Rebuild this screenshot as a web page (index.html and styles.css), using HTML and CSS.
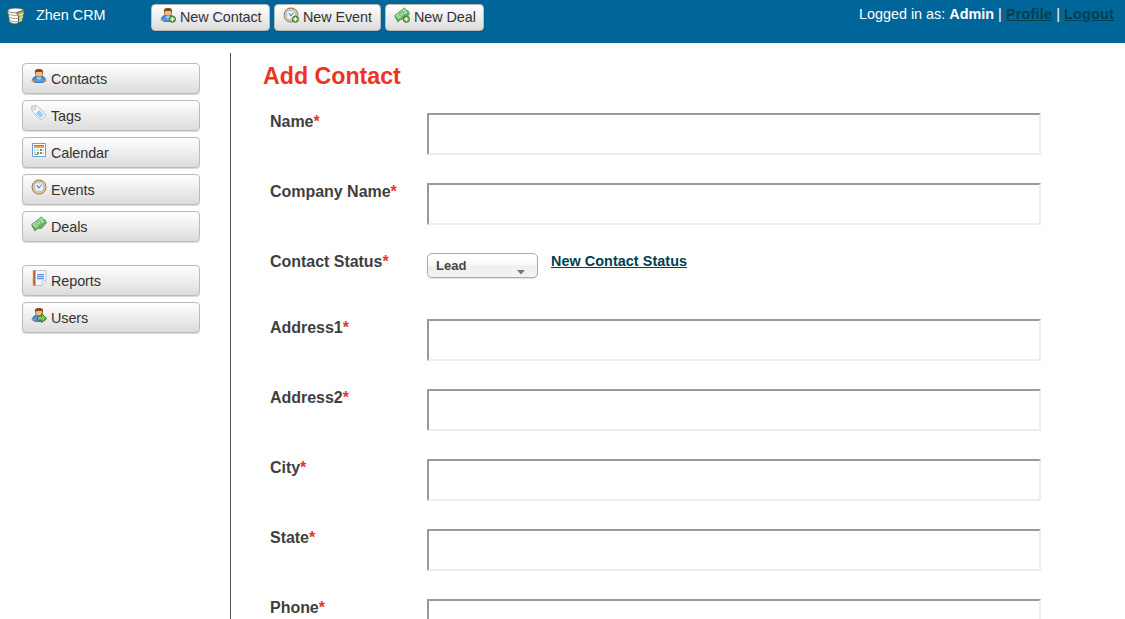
FILE: index.html
```html
<!DOCTYPE html>
<html lang="en">
<head>
<meta charset="utf-8">
<title>Zhen CRM</title>
<link rel="stylesheet" href="styles.css">
</head>
<body>
<svg class="defs" width="0" height="0">
  <defs>
    <linearGradient id="blue" x1="0" y1="0" x2="0" y2="1"><stop offset="0" stop-color="#2b7fe0"/><stop offset="1" stop-color="#58b0fa"/></linearGradient>
    <symbol id="person" viewBox="0 0 16 16">
      <path d="M1.500 12.500C1.500 10 3.300 8.500 5.500 8.500h5c2.200 0 4 1.500 4 4l-2.500 1.800H4z" fill="url(#blue)" stroke="#2462b5"/>
      <path d="M5.300 8.800h5.400L9.500 11.500h-3z" fill="#9fd4ff"/>
      <ellipse cx="2" cy="12.600" rx="1.400" ry="1.200" fill="#d98545"/><ellipse cx="14" cy="12.600" rx="1.400" ry="1.200" fill="#d98545"/>
      <path d="M4.500 3.500h7v3c0 1.600-1.700 2.400-3.500 2.400S4.500 8.100 4.500 6.500z" fill="#f3b987" stroke="#a85c28" stroke-width=".8"/>
      <path d="M4 5.300C3.500 2.500 4.500 1 8 1s4.500 1.500 4 4.300l-1.300-1.200H5.300z" fill="#87491b"/>
    </symbol>
    <symbol id="plus" viewBox="0 0 16 16">
      <circle cx="12.400" cy="12.200" r="3.200" fill="#6aa842" stroke="#3c762a" stroke-width=".8"/>
      <path d="M12.400 10.200v4M10.400 12.200h4" stroke="#fff" stroke-width="1.300"/>
    </symbol>
    <symbol id="clock" viewBox="0 0 16 16">
      <circle cx="8" cy="8" r="6.800" fill="#edf4fd" stroke="#98754a" stroke-width="1.300"/>
      <circle cx="8" cy="8" r="6" fill="none" stroke="#ecc98c" stroke-width="1.100"/>
      <circle cx="8" cy="8" r="5" fill="none" stroke="#86a5cf" stroke-width=".8"/>
      <path d="M6 6l1.800 3.200 2.700-3.700" fill="none" stroke="#4c6d9c"/>
      <path d="M8 3.600v1M8 11.500v1M3.600 8h1M11.500 8h1" stroke="#8ba1be" stroke-width=".8"/>
    </symbol>
    <symbol id="money" viewBox="0 0 16 16">
      <path d="M.9 9.500l3 5.500 3-2.700 3.500.2 5-5.500-1.500-3.500z" fill="#6fb66b" stroke="#47904a" stroke-width=".8"/>
      <path d="M.6 8.500L10.500.9l4 4.600-9.800 7.200z" fill="#97d28f" stroke="#4f9e54" stroke-width=".9"/>
      <path d="M2.500 8.600l7.800-5.900 2.300 2.800-7.700 5.600z" fill="none" stroke="#c2e8bc" stroke-width=".7"/>
      <ellipse cx="7.700" cy="7" rx="1.900" ry="2.100" fill="#d3f0cd" stroke="#58a05a" stroke-width=".8"/>
      <path d="M7.200 6.200l1.200 1.600" stroke="#398a45" stroke-width=".8"/>
    </symbol>
    <symbol id="tag" viewBox="0 0 16 16">
      <path d="M.7 1.200l5.300-.5 9.200 9.200-5 5.100L1.100 6.200z" fill="#fbfdfe" stroke="#b0b9c0" stroke-width="1"/>
      <circle cx="3.700" cy="3.700" r="1.200" fill="#fff" stroke="#9fabb3" stroke-width=".8"/>
      <path d="M8 5l4.800 4.800-3.200 3.200-4.800-4.800z" fill="#8fd0fc"/>
    </symbol>
    <symbol id="calendar" viewBox="0 0 16 16">
      <path d="M1.500 1.500h13v13h-13z" fill="#fff" stroke="#6a9fdc"/>
      <path d="M3 3h10v3H3z" fill="#ff9a5c"/><path d="M3 3h10v1H3z" fill="#e0622c"/>
      <path d="M3 7h2v2H3zM6 7h2v2H6zM3 10h2v2H3zM12 7h1v2h-1zM12 10h1v2h-1z" fill="#c5d8ec"/>
      <path d="M9 7h2v2H9zM6 10h2v2H6zM9 10h2v2H9zM4 12h3v1H4z" fill="#5fa052"/>
    </symbol>
    <symbol id="report" viewBox="0 0 16 16">
      <path d="M2.500.500h12.500v10.500l-4 4.500h-8.500z" fill="#f4f8fc" stroke="#b7c5d5"/>
      <path d="M2 .5h2.500v15H2z" fill="#bb5e32"/><path d="M1 2h2M1 4.500h2M1 7h2M1 9.500h2M1 12h2M1 14.500h2" stroke="#ddb294" stroke-width=".8"/>
      <path d="M6 4h7v1.200H6zM6 6h7v1.200H6zM6 8h7v1.200H6z" fill="#5290e5"/>
      <path d="M11 15v-4h4" fill="#fff" stroke="#b9c4cf"/>
    </symbol>
    <symbol id="arrow" viewBox="0 0 16 16">
      <path d="M6.500 9.200h4V6.500l5 4.700-5 4.300V13.200h-4z" fill="#7fc35c" stroke="#317f2c"/>
    </symbol>
  </defs>
</svg>

<header class="topbar">
  <div class="brand">
    <svg class="logo" viewBox="0 0 18 18">
      <path d="M.7 3.500v3l.7.700v3l.6.700v3.300C4 17 8.500 17.700 11.500 16V6.500L9 4z" fill="#fffef4" stroke="#514e42" stroke-width=".8"/>
      <path d="M1 6.600c2 1.700 6 2.200 9.500 1.600M1.600 9.800c2 1.700 6 2.200 9.500 1.600M2.200 13c2 1.700 6 2.200 9 1.600" fill="none" stroke="#77735f" stroke-width=".7"/>
      <path d="M9.500 5.800l7.700-2.300v3l-.8 1v3l-.8 1v2.200L11.500 16V9z" fill="#b9ba6b" stroke="#514e42" stroke-width=".8"/>
      <path d="M12 8.500l4.500-1.700M12 11.600l4-1.800M12 14.600l3.300-1.700" stroke="#fffbdc" stroke-width=".8"/>
      <path d="M.8 3.500C2 .5 14 .2 17 3.200L9.500 5.600C5 6 1.500 5.300.8 3.500z" fill="#fffef8" stroke="#514e42" stroke-width=".7"/>
    </svg>
    <span class="brand-name">Zhen CRM</span>
  </div>
  <nav class="actions">
    <a class="button new-contact"><svg class="icon"><use href="#person"/><use href="#plus"/></svg><span>New Contact</span></a>
    <a class="button new-event"><svg class="icon"><use href="#clock"/><use href="#plus"/></svg><span>New Event</span></a>
    <a class="button new-deal"><svg class="icon"><use href="#money"/><use href="#plus"/></svg><span>New Deal</span></a>
  </nav>
  <div class="session">Logged in as: <b>Admin</b> | <a class="link">Profile</a> | <a class="link">Logout</a></div>
</header>

<div class="layout">
  <nav class="sidebar">
    <a class="button"><svg class="icon"><use href="#person"/></svg><span>Contacts</span></a>
    <a class="button"><svg class="icon"><use href="#tag"/></svg><span>Tags</span></a>
    <a class="button"><svg class="icon"><use href="#calendar"/></svg><span>Calendar</span></a>
    <a class="button"><svg class="icon"><use href="#clock"/></svg><span>Events</span></a>
    <a class="button"><svg class="icon"><use href="#money"/></svg><span>Deals</span></a>
    <a class="button admin-start"><svg class="icon"><use href="#report"/></svg><span>Reports</span></a>
    <a class="button"><svg class="icon"><use href="#person"/><use href="#arrow"/></svg><span>Users</span></a>
  </nav>
  <main class="content">
    <h1 class="title">Add Contact</h1>
    <form class="form">
      <div class="row"><label class="label">Name<i>*</i></label><input class="field"></div>
      <div class="row"><label class="label">Company Name<i>*</i></label><input class="field"></div>
      <div class="row status"><label class="label">Contact Status<i>*</i></label>
        <div class="select"><span>Lead</span><svg class="caret" viewBox="0 0 8 5"><path d="M0 0h8L4 4.500z" fill="#777"/></svg></div>
        <a class="link new-status">New Contact Status</a></div>
      <div class="row"><label class="label">Address1<i>*</i></label><input class="field"></div>
      <div class="row"><label class="label">Address2<i>*</i></label><input class="field"></div>
      <div class="row"><label class="label">City<i>*</i></label><input class="field"></div>
      <div class="row"><label class="label">State<i>*</i></label><input class="field"></div>
      <div class="row"><label class="label">Phone<i>*</i></label><input class="field"></div>
    </form>
  </main>
</div>
</body>
</html>
```
FILE: styles.css
```css
* { box-sizing: border-box; }
body {
  margin: 0;
  height: 619px;
  overflow: hidden;
  background: #fff;
  color: #3f3f3f;
  font: 14.4px/17px "Liberation Sans", Arial, sans-serif;
}
.defs { position: absolute; }
.topbar {
  display: flex;
  align-items: flex-start;
  height: 43px;
  background: #006699;
  color: #fff;
}
.brand { display: flex; width: 151px; padding: 7px 0 0 7px; }
.logo { width: 18px; height: 18px; }
.brand-name { margin-left: 11px; }
.actions { display: flex; gap: 4px; padding-top: 4px; }
.button {
  display: flex;
  border: 1px solid #bbb;
  border-radius: 4px;
  background: linear-gradient(#fff, #dcdcdc);
  color: #333;
  box-shadow: 0 1px 1px rgba(0, 0, 0, .15);
  white-space: nowrap;
}
.sidebar .button, .actions .button { letter-spacing: -.08px; }
.actions .button { height: 27px; padding: 0 8px; line-height: 25px; }
.new-contact { width: 119px; }
.new-event { width: 107px; }
.new-deal { width: 99px; }
.icon { width: 16px; height: 16px; flex: none; }
.actions .icon { margin: 2px 4px 0 0; }
.session { margin-left: auto; padding: 6px 11px 0 0; }
.link { color: #00404f; font-weight: bold; text-decoration: underline; }
.session .link { letter-spacing: .22px; }
.layout { display: flex; height: 576px; padding-top: 10px; overflow: hidden; }
.sidebar {
  display: flex;
  flex-direction: column;
  gap: 6px;
  width: 231px;
  padding: 10px 31px 0 22px;
  border-right: 1px solid #555;
}
.sidebar .button { width: 178px; height: 31px; padding-left: 8px; line-height: 30px; }
.sidebar .icon { margin: 4px 4px 0 0; }
.sidebar .admin-start { margin-top: 17px; }
.content { padding: 9px 0 0 32px; }
.title {
  margin: 0 0 23px;
  color: #ee3322;
  font-size: 23.2px;
  line-height: 28px;
}
.form { padding-left: 7px; }
.row { display: flex; align-items: flex-start; height: 70px; }
.status { height: 66px; }
.label { width: 157px; font-size: 16px; font-weight: bold; line-height: 17px; letter-spacing: -.03px; }
.label i { color: #ee3322; font-style: normal; }
.field {
  width: 614px;
  height: 42px;
  border: 2px solid;
  border-color: #999 #eee #eee #999;
  background: #fff;
}
.select {
  display: flex;
  justify-content: space-between;
  width: 111px;
  height: 25px;
  padding: 0 12px 0 8px;
  border: 1px solid #aaa;
  border-radius: 5px;
  background: linear-gradient(#fff 20%, #f6f6f6 50%, #eee 52%, #f4f4f4 100%);
  box-shadow: 0 1px 1px rgba(0, 0, 0, .12);
  color: #444;
  font-size: 13px;
  font-weight: bold;
  line-height: 24px;
}
.caret { width: 8px; height: 5px; margin-top: 16px; }
.new-status { margin-left: 13px; letter-spacing: .05px; }
```
